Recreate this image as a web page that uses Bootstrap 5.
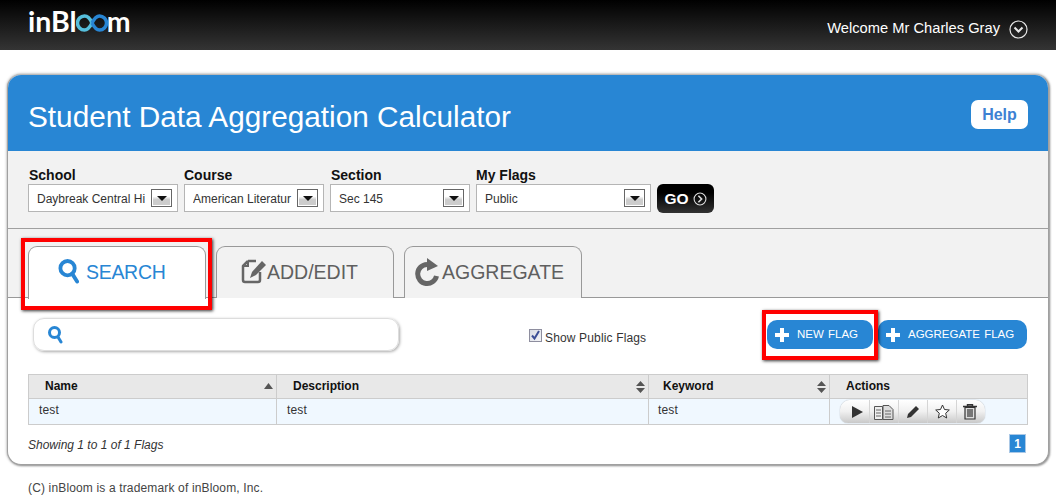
<!DOCTYPE html>
<html lang="en">
<head>
<meta charset="utf-8">
<title>Student Data Aggregation Calculator</title>
<link href="https://cdn.jsdelivr.net/npm/bootstrap@5.3.0/dist/css/bootstrap.min.css" rel="stylesheet">
<style>
body{font-family:"Liberation Sans",Arial,sans-serif;background:#fff;color:#333;font-size:12px;overflow:hidden}
.topbar{height:50px;background:linear-gradient(#000,#343434);padding:0 28px}
.logo-text{font-family:Lato,sans-serif;font-weight:700;font-size:28.500px;line-height:1;color:#fff;margin-top:-8px}
.logo-text svg{margin:0 -1px;vertical-align:-1px}
.welcome{font-size:14.7px;color:#fff;margin-top:6px}
.welcome-arrow{margin-top:9px;margin-left:9px}
.panel-box{margin:24px 7px 0;height:391px;border:1px solid #a0a0a0;border-top-color:#bbb;border-radius:14px;box-shadow:0 0 3px #999,1px 1px 2px #999;overflow:visible;background:#fff}
.panel-head{height:76px;background:#2886d4;border-radius:13px 13px 0 0;padding:8px 20px 0}
.panel-title{font-size:29.750px;color:#fff;font-weight:400;margin:0;line-height:1}
.help-btn{width:57px;height:29px;background:#fff;border-radius:7px;color:#3d81d3;font-weight:700;font-size:16px;border:0;padding:0;margin-bottom:5px}
.filter-bar{height:78px;background:#f2f2f2;border-bottom:1px solid #a0a0a0;padding:16px 20px 0;gap:6px}
.filter-label{font-size:14px;font-weight:700;color:#111;line-height:17px;height:17px}
.label-nudge{padding-left:1px}
.fake-select{height:28px;border:1px solid #b5b5b5;background:#fff;color:#333;padding:0 5px 0 8px;font-size:12px;white-space:nowrap}
.w-school{width:150px}.w-course{width:140px}.w-flags{width:175px}
.fake-select span{overflow:hidden;flex:1;padding-top:1px}
.sel-arrow{flex:none;width:21px;height:18px;border:1px solid #666;background:linear-gradient(#fff 40%,#ccc 60%);box-shadow:inset 0 0 0 1px #fff}
.sel-arrow::before{content:"";border:5px solid transparent;border-top:5px solid #111;border-bottom:0}
.go-btn{width:57px;height:29px;margin-top:17px;background:linear-gradient(#000 30%,#333);border-radius:6px;color:#fff;font-weight:700;font-size:15.500px;border:0;padding:0;gap:4px}
.tab-strip{height:69px;background:#f2f2f2;border-bottom:1px solid #999;padding:17px 20px 0;gap:10px}
.tab-item{position:relative;width:178px;height:52px;border:1px solid #999;border-bottom:0;border-radius:9px 9px 0 0;font-size:19.500px;color:#5f5f5f;background:#f2f2f2;padding-top:11px;line-height:27px;white-space:nowrap}
.tab-item>span{padding-top:1px}
.tab-item.is-on{background:#fff;color:#2886d4;height:53px;z-index:1;padding-left:29px;letter-spacing:-.3px}
.tab-add{padding-left:24px}
.tab-agg{padding-left:10px}
.tab-item.is-on svg{margin-right:7px}
.hilite{position:absolute;border:4px solid #f00;box-shadow:1px 1px 3px rgba(0,0,0,.8);z-index:3;pointer-events:none}
.hilite-tab{left:-8px;right:-7px;top:-9px;bottom:-11px}
.hilite-btn{left:-5px;right:-5px;top:-10px;bottom:-11px}
.tool-row{height:76px;padding:0 21px 0 25px}
.search-box{width:366px;height:33px;border:1px solid #ddd;border-radius:11px;box-shadow:1px 1px 3px #aaa;margin-top:20px;padding-left:14px}
.show-public{margin-top:31px;margin-left:130px;font-size:12px;color:#333;gap:3px;line-height:14px;letter-spacing:.15px}
.show-public span+span{padding-top:2px}
.check-box{width:13px;height:13px;border:1px solid #8e8e9f;background:linear-gradient(135deg,#d8dce4,#f4f4f6);display:block}
.flag-btn{position:relative;height:29px;background:#2886d4;border-radius:10px;color:#fff;font-size:11.500px;border:0;padding:0 0 0 8px;word-spacing:1px;gap:8px;white-space:nowrap}
.btn-new{width:106px;margin-right:5px}.btn-agg{width:149px}
.flag-wrap{margin-top:22px;margin-left:auto}
.flag-table{width:999px;margin:0 0 0 20px;border-collapse:collapse;table-layout:fixed;font-size:12px;color:#333}
.flag-table th,.flag-table td{border:1px solid #ccc;padding:0;height:24px}
.flag-table th{background:#e8e8e8;color:#111;font-weight:700;padding:0 0 2px 16px;position:relative}
.flag-table td{background:#f0f8ff;height:26px;padding:0 0 3px 10px;letter-spacing:.15px}
.flag-table th.key-head{padding-left:14px}
.flag-table td.key-cell{padding-left:9px}
.flag-table td.act-cell{padding-bottom:0}
.sort-up,.sort-both{position:absolute;right:3px;top:6px}
.act-group{width:145px;height:23px;border-radius:10px 10px 8px 8px;background:linear-gradient(#fff,#f0f0f0 50%,#c9c9c9);box-shadow:0 0 1px #888}
.act-group>span{flex:0 0 29px;border-left:1px solid #d5d5d5;height:100%}
.act-group>span:first-child{border-left:0;padding-left:5px}
.act-group>span:last-child{padding-right:3px}
.table-foot{padding:9px 22px 0 20px}
.showing{font-style:italic;font-size:12px;color:#333;margin-top:2px}
.page-one{width:17px;height:19px;background:#2886d4;border:1px solid #aac8e6;color:#fff;font-weight:700;font-size:12px}
.copy-line{margin:14px 0 0 28px;font-size:12px;color:#444;letter-spacing:.15px}
</style>
</head>
<body>
<header class="topbar d-flex justify-content-between align-items-center">
  <div class="logo-text">inBl<svg width="32" height="20" viewBox="0 0 31 20"><path d="M15.500 10C13 4 10 3 8 3a7 7 0 0 0 0 14c2.500 0 5-2 7.500-7" fill="none" stroke="#56bfdc" stroke-width="3.500"/><path d="M15.500 10c2.500 5 5 7 7.500 7a7 7 0 0 0 0-14c-2.500 0-5 2-7.500 7" fill="none" stroke="#2886d4" stroke-width="3.500"/></svg>m</div>
  <div class="d-flex align-items-start">
    <span class="welcome">Welcome Mr Charles Gray</span>
    <svg class="welcome-arrow" width="19" height="19" viewBox="0 0 19 19"><circle cx="9.500" cy="9.500" r="8.500" fill="none" stroke="#e8e8e8" stroke-width="1.200"/><path d="M5.500 7.500l4 4 4-4" fill="none" stroke="#e8e8e8" stroke-width="2"/></svg>
  </div>
</header>

<main class="panel-box">
  <div class="panel-head d-flex justify-content-between align-items-center">
    <h1 class="panel-title">Student Data Aggregation Calculator</h1>
    <button class="help-btn" type="button">Help</button>
  </div>

  <div class="filter-bar d-flex">
    <div>
      <div class="filter-label label-nudge">School</div>
      <div class="fake-select w-school d-flex align-items-center"><span>Daybreak Central Hi</span><i class="sel-arrow d-flex align-items-center justify-content-center"></i></div>
    </div>
    <div>
      <div class="filter-label">Course</div>
      <div class="fake-select w-course d-flex align-items-center"><span>American Literatur</span><i class="sel-arrow d-flex align-items-center justify-content-center"></i></div>
    </div>
    <div>
      <div class="filter-label label-nudge">Section</div>
      <div class="fake-select w-course d-flex align-items-center"><span>Sec 145</span><i class="sel-arrow d-flex align-items-center justify-content-center"></i></div>
    </div>
    <div>
      <div class="filter-label">My Flags</div>
      <div class="fake-select w-flags d-flex align-items-center"><span>Public</span><i class="sel-arrow d-flex align-items-center justify-content-center"></i></div>
    </div>
    <div>
      <button class="go-btn d-flex align-items-center justify-content-center" type="button">GO<svg width="14" height="14" viewBox="0 0 13 13"><circle cx="6.500" cy="6.500" r="5.500" fill="none" stroke="#ddd"/><path d="M5 3.500l3 3-3 3" fill="none" stroke="#ddd" stroke-width="1.500"/></svg></button>
    </div>
  </div>

  <div class="tab-strip d-flex">
    <div class="tab-item is-on d-flex">
      <svg width="21" height="27" viewBox="0 0 22 27"><circle cx="10" cy="10" r="7.500" fill="none" stroke="#2886d4" stroke-width="4"/><path d="M15 16l5 8" stroke="#2886d4" stroke-width="4" stroke-linecap="round"/></svg><span>SEARCH</span>
      <div class="hilite hilite-tab"></div>
    </div>
    <div class="tab-item tab-add d-flex">
      <svg width="26" height="27" viewBox="0 0 26 27"><path d="M7 3h8M7 3L2 8v14q0 2 2 2h13q2 0 2-2v-8" fill="none" stroke="#666" stroke-width="2.500" stroke-linejoin="round"/><path d="M7 3v5H2" fill="none" stroke="#666" stroke-width="2"/><path d="M9 20l2-6L21 3l4 4-10 10z" fill="#666"/></svg><span>ADD/EDIT</span>
    </div>
    <div class="tab-item tab-agg d-flex">
      <svg width="27" height="29" viewBox="0 0 27 29"><path d="M12 6.500A9.500 9.500 0 1 0 21.500 18" fill="none" stroke="#666" stroke-width="5"/><path d="M12 0l11 8-11 5z" fill="#666"/></svg><span>AGGREGATE</span>
    </div>
  </div>

  <div class="tool-row d-flex">
    <div class="search-box d-flex align-items-center">
      <svg width="15" height="18" viewBox="0 0 15 18"><circle cx="6.500" cy="6.500" r="5" fill="none" stroke="#2886d4" stroke-width="3"/><path d="M10 11l3 5" stroke="#2886d4" stroke-width="3" stroke-linecap="round"/></svg>
    </div>
    <label class="show-public d-flex align-items-start">
      <span class="check-box"><svg width="11" height="11" viewBox="0 0 11 11" class="d-block"><path d="M2 5.500l2.500 3L9 1" fill="none" stroke="#3c4f96" stroke-width="2"/></svg></span>
      <span>Show Public Flags</span>
    </label>
    <div class="flag-wrap d-flex align-items-start">
      <button class="flag-btn btn-new d-flex align-items-center" type="button">
        <svg width="14" height="14" viewBox="0 0 14 14"><path d="M5 0h4v5h5v4H9v5H5V9H0V5h5z" fill="#fff"/></svg>NEW FLAG
        <span class="hilite hilite-btn"></span>
      </button>
      <button class="flag-btn btn-agg d-flex align-items-center" type="button">
        <svg width="14" height="14" viewBox="0 0 14 14"><path d="M5 0h4v5h5v4H9v5H5V9H0V5h5z" fill="#fff"/></svg>AGGREGATE FLAG
      </button>
    </div>
  </div>

  <table class="flag-table">
    <colgroup><col style="width:248px"><col style="width:372px"><col style="width:181px"><col style="width:198px"></colgroup>
    <thead>
      <tr>
        <th>Name<svg class="sort-up" width="9" height="6" viewBox="0 0 9 6" style="top:8px"><path d="M0 6l4.500-6L9 6z" fill="#555"/></svg></th>
        <th>Description<svg class="sort-both" width="9" height="12" viewBox="0 0 9 12"><path d="M0 5l4.500-5L9 5zM0 7l4.500 5L9 7z" fill="#555"/></svg></th>
        <th class="key-head">Keyword<svg class="sort-both" width="9" height="12" viewBox="0 0 9 12"><path d="M0 5l4.500-5L9 5zM0 7l4.500 5L9 7z" fill="#555"/></svg></th>
        <th>Actions</th>
      </tr>
    </thead>
    <tbody>
      <tr>
        <td>test</td>
        <td>test</td>
        <td class="key-cell">test</td>
        <td class="act-cell">
          <div class="act-group d-flex">
            <span class="d-flex align-items-center justify-content-center"><svg width="13" height="14" viewBox="0 0 13 14"><path d="M1 1l11 6-11 6z" fill="#333"/></svg></span>
            <span class="d-flex align-items-center justify-content-center"><svg width="20" height="16" viewBox="0 0 20 16"><path d="M.5 2.500h8v13h-8z" fill="#eee" stroke="#555"/><path d="M9 1.500h6l4 4v10H9z" fill="#ddd" stroke="#555"/><path d="M2 6h5M2 9h5M2 12h5M11 7h6M11 10h6M11 13h6" stroke="#666"/></svg></span>
            <span class="d-flex align-items-center justify-content-center"><svg width="14" height="14" viewBox="0 0 14 14"><path d="M1 13l1-4L10 1l3 3-8 8z" fill="#333"/></svg></span>
            <span class="d-flex align-items-center justify-content-center"><svg width="15" height="15" viewBox="0 0 15 15"><path d="M7.500 1l2 4.500 4.800.5-3.600 3.200 1 4.800-4.200-2.500L3.300 14l1-4.800L.7 6l4.800-.5z" fill="#fff" stroke="#333"/></svg></span>
            <span class="d-flex align-items-center justify-content-center"><svg width="14" height="16" viewBox="0 0 14 16"><path d="M0 2.500h14M4.500 2.500V.700h5v1.800" fill="none" stroke="#333" stroke-width="1.400"/><path d="M2 3.500h10V15H2z" fill="#ddd" stroke="#333" stroke-width="1.200"/><path d="M5 5v8M7 5v8M9 5v8" stroke="#333" stroke-width="1.200"/></svg></span>
          </div>
        </td>
      </tr>
    </tbody>
  </table>

  <div class="table-foot d-flex justify-content-between align-items-start">
    <span class="showing">Showing 1 to 1 of 1 Flags</span>
    <span class="page-one d-flex align-items-center justify-content-center">1</span>
  </div>
</main>

<footer class="copy-line">(C) inBloom is a trademark of inBloom, Inc.</footer>
<script src="https://cdn.jsdelivr.net/npm/bootstrap@5.3.0/dist/js/bootstrap.bundle.min.js"></script>
</body>
</html>
